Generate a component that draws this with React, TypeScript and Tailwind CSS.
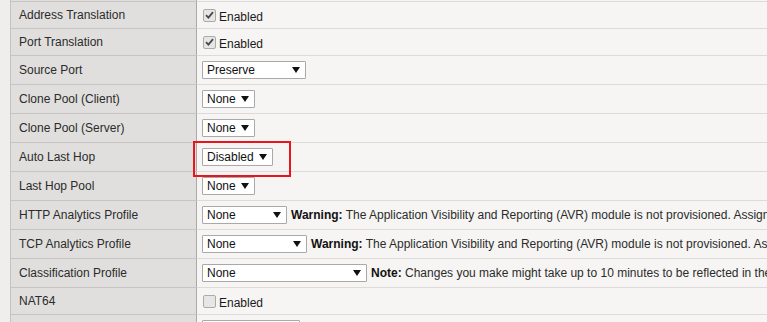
import React from "react";

type Row =
  | { label: string; kind: "check"; checked: boolean }
  | { label: string; kind: "select"; value: string; width: number; note?: { bold: string; text: string } };

const rows: Row[] = [
  { label: "Address Translation", kind: "check", checked: true },
  { label: "Port Translation", kind: "check", checked: true },
  { label: "Source Port", kind: "select", value: "Preserve", width: 104 },
  { label: "Clone Pool (Client)", kind: "select", value: "None", width: 53 },
  { label: "Clone Pool (Server)", kind: "select", value: "None", width: 53 },
  { label: "Auto Last Hop", kind: "select", value: "Disabled", width: 71 },
  { label: "Last Hop Pool", kind: "select", value: "None", width: 53 },
  {
    label: "HTTP Analytics Profile",
    kind: "select",
    value: "None",
    width: 85,
    note: {
      bold: "Warning:",
      text: "The Application Visibility and Reporting (AVR) module is not provisioned. Assign resources to it first.",
    },
  },
  {
    label: "TCP Analytics Profile",
    kind: "select",
    value: "None",
    width: 105,
    note: {
      bold: "Warning:",
      text: "The Application Visibility and Reporting (AVR) module is not provisioned. Assign resources to it first.",
    },
  },
  {
    label: "Classification Profile",
    kind: "select",
    value: "None",
    width: 165,
    note: {
      bold: "Note:",
      text: "Changes you make might take up to 10 minutes to be reflected in the system.",
    },
  },
  { label: "NAT64", kind: "check", checked: false },
  { label: "Mirror", kind: "select", value: "None", width: 98 },
];

function Checkbox({ checked }: { checked: boolean }) {
  return (
    <span className="w-[13px] h-[13px] rounded-[2px] border border-[#ababab] bg-[#e6e6e6] flex items-center justify-center shrink-0">
      {checked && (
        <svg width="9" height="8" viewBox="0 0 9 8">
          <path d="M1 4.2 L3.4 6.6 L8 1.2" fill="none" stroke="#4a4a4a" strokeWidth="1.8" />
        </svg>
      )}
    </span>
  );
}

function Select({ value, width }: { value: string; width: number }) {
  return (
    <div
      className="h-[18px] bg-white border border-[#a9a9a9] rounded-[1px] flex items-center justify-between pl-[4px] pr-[4px] shrink-0"
      style={{ width }}
    >
      <span className="text-[12px] text-[#111]">{value}</span>
      <svg width="8" height="6" viewBox="0 0 8 6" className="mr-[1px]">
        <polygon points="0,0 8,0 4,6" fill="#111" />
      </svg>
    </div>
  );
}

export default function App() {
  return (
    <div
      className="relative w-[767px] h-[322px] overflow-hidden bg-[#efeeec] pl-[10px] text-[12px] text-[#2b2b2b]"
      style={{ fontFamily: '"Liberation Sans", Arial, sans-serif' }}
    >
      <div className="border-l border-[#c3c3c1] w-[2000px]">
        <div className="flex h-[1px]">
          <div className="w-[185px] bg-[#e0dfdd]" />
          <div className="flex-1 border-l border-[#a9a9a9] bg-[#f6f5f3]" />
        </div>
        {rows.map((r) => (
          <div key={r.label} className={`flex ${r.kind === "check" ? "h-[27px]" : "h-[29px]"}`}>
            <div className="w-[185px] shrink-0 bg-[#e0dfdd] border-t border-[#c6c5c3] pl-[8px] flex items-center whitespace-nowrap">
              {r.label}
            </div>
            <div className="flex-1 bg-[#f6f5f3] border-t border-[#dcdbd9] border-l border-l-[#a9a9a9] pl-[5px] flex items-center whitespace-nowrap">
              {r.kind === "check" ? (
                <div className="flex items-center gap-[3px] pl-[1px]">
                  <Checkbox checked={r.checked} />
                  <span className="pt-[3px] text-[#1a1a1a]">Enabled</span>
                </div>
              ) : (
                <div className="flex items-center">
                  <Select value={r.value} width={r.width} />
                  {r.note && (
                    <span className="ml-[4px] text-[#2b2b2b]">
                      <b className="text-[#111]">{r.note.bold}</b> {r.note.text}
                    </span>
                  )}
                </div>
              )}
            </div>
          </div>
        ))}
      </div>
      <div className="absolute left-[193px] top-[141px] w-[98px] h-[36px] border-2 border-[#e8161c]" />
    </div>
  );
}
